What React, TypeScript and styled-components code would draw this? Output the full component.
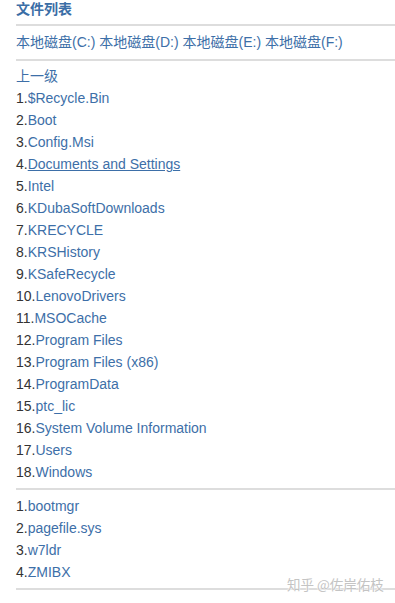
import React from "react";
import styled, { createGlobalStyle } from "styled-components";

const Global = createGlobalStyle`
  html, body { margin: 0; padding: 0; background: #fff; }
  body {
    font-family: "Liberation Sans", Arial, "Noto Sans CJK SC", sans-serif;
    font-size: 14px;
    color: #333;
  }
`;

const Page = styled.div`
  position: relative;
  padding-left: 16px;
  width: 395px;
  height: 603px;
  box-sizing: border-box;
  overflow: hidden;
`;

const Title = styled.h3`
  margin: 0;
  height: 24px;
  line-height: 18px;
  font-size: 14px;
  font-weight: bold;
  color: #3b6ea6;
`;

const Section = styled.div<{ $pt: number; $pb: number }>`
  border-top: 2px solid #dddddd;
  padding: ${(p) => p.$pt}px 0 ${(p) => p.$pb}px;
`;

const Line = styled.div`
  line-height: 22px;
  height: 22px;
  white-space: nowrap;
`;

const Link = styled.a<{ $hover?: boolean }>`
  color: #3d6fa8;
  text-decoration: ${(p) => (p.$hover ? "underline" : "none")};
  cursor: pointer;
`;

const Bottom = styled.div`
  border-top: 2px solid #dddddd;
`;

const Watermark = styled.div`
  position: absolute;
  left: 287px;
  top: 575px;
  font-size: 13.5px;
  line-height: 18px;
  color: #c4c4c4;
  font-family: "Noto Sans CJK SC", sans-serif;
  text-shadow: 0 0 1px #fff, 0 0 1px #fff, 0 0 2px #fff;
  white-space: nowrap;
`;

const drives = ["C", "D", "E", "F"];
const dirs = [
  "$Recycle.Bin",
  "Boot",
  "Config.Msi",
  "Documents and Settings",
  "Intel",
  "KDubaSoftDownloads",
  "KRECYCLE",
  "KRSHistory",
  "KSafeRecycle",
  "LenovoDrivers",
  "MSOCache",
  "Program Files",
  "Program Files (x86)",
  "ProgramData",
  "ptc_lic",
  "System Volume Information",
  "Users",
  "Windows",
];
const files = ["bootmgr", "pagefile.sys", "w7ldr", "ZMIBX"];

export default function App() {
  return (
    <Page>
      <Global />
      <Title>文件列表</Title>
      <Section $pt={5} $pb={6}>
        <Line>
          {drives.map((d, i) => (
            <React.Fragment key={d}>
              {i > 0 && " "}
              <Link>本地磁盘({d}:)</Link>
            </React.Fragment>
          ))}
        </Line>
      </Section>
      <Section $pt={4} $pb={5}>
        <Line>
          <Link>上一级</Link>
        </Line>
        {dirs.map((d, i) => (
          <Line key={d}>
            {i + 1}.<Link $hover={d === "Documents and Settings"}>{d}</Link>
          </Line>
        ))}
      </Section>
      <Section $pt={5} $pb={5}>
        {files.map((f, i) => (
          <Line key={f}>
            {i + 1}.<Link>{f}</Link>
          </Line>
        ))}
      </Section>
      <Bottom />
      <Watermark>知乎 @佐岸佑枝</Watermark>
    </Page>
  );
}
